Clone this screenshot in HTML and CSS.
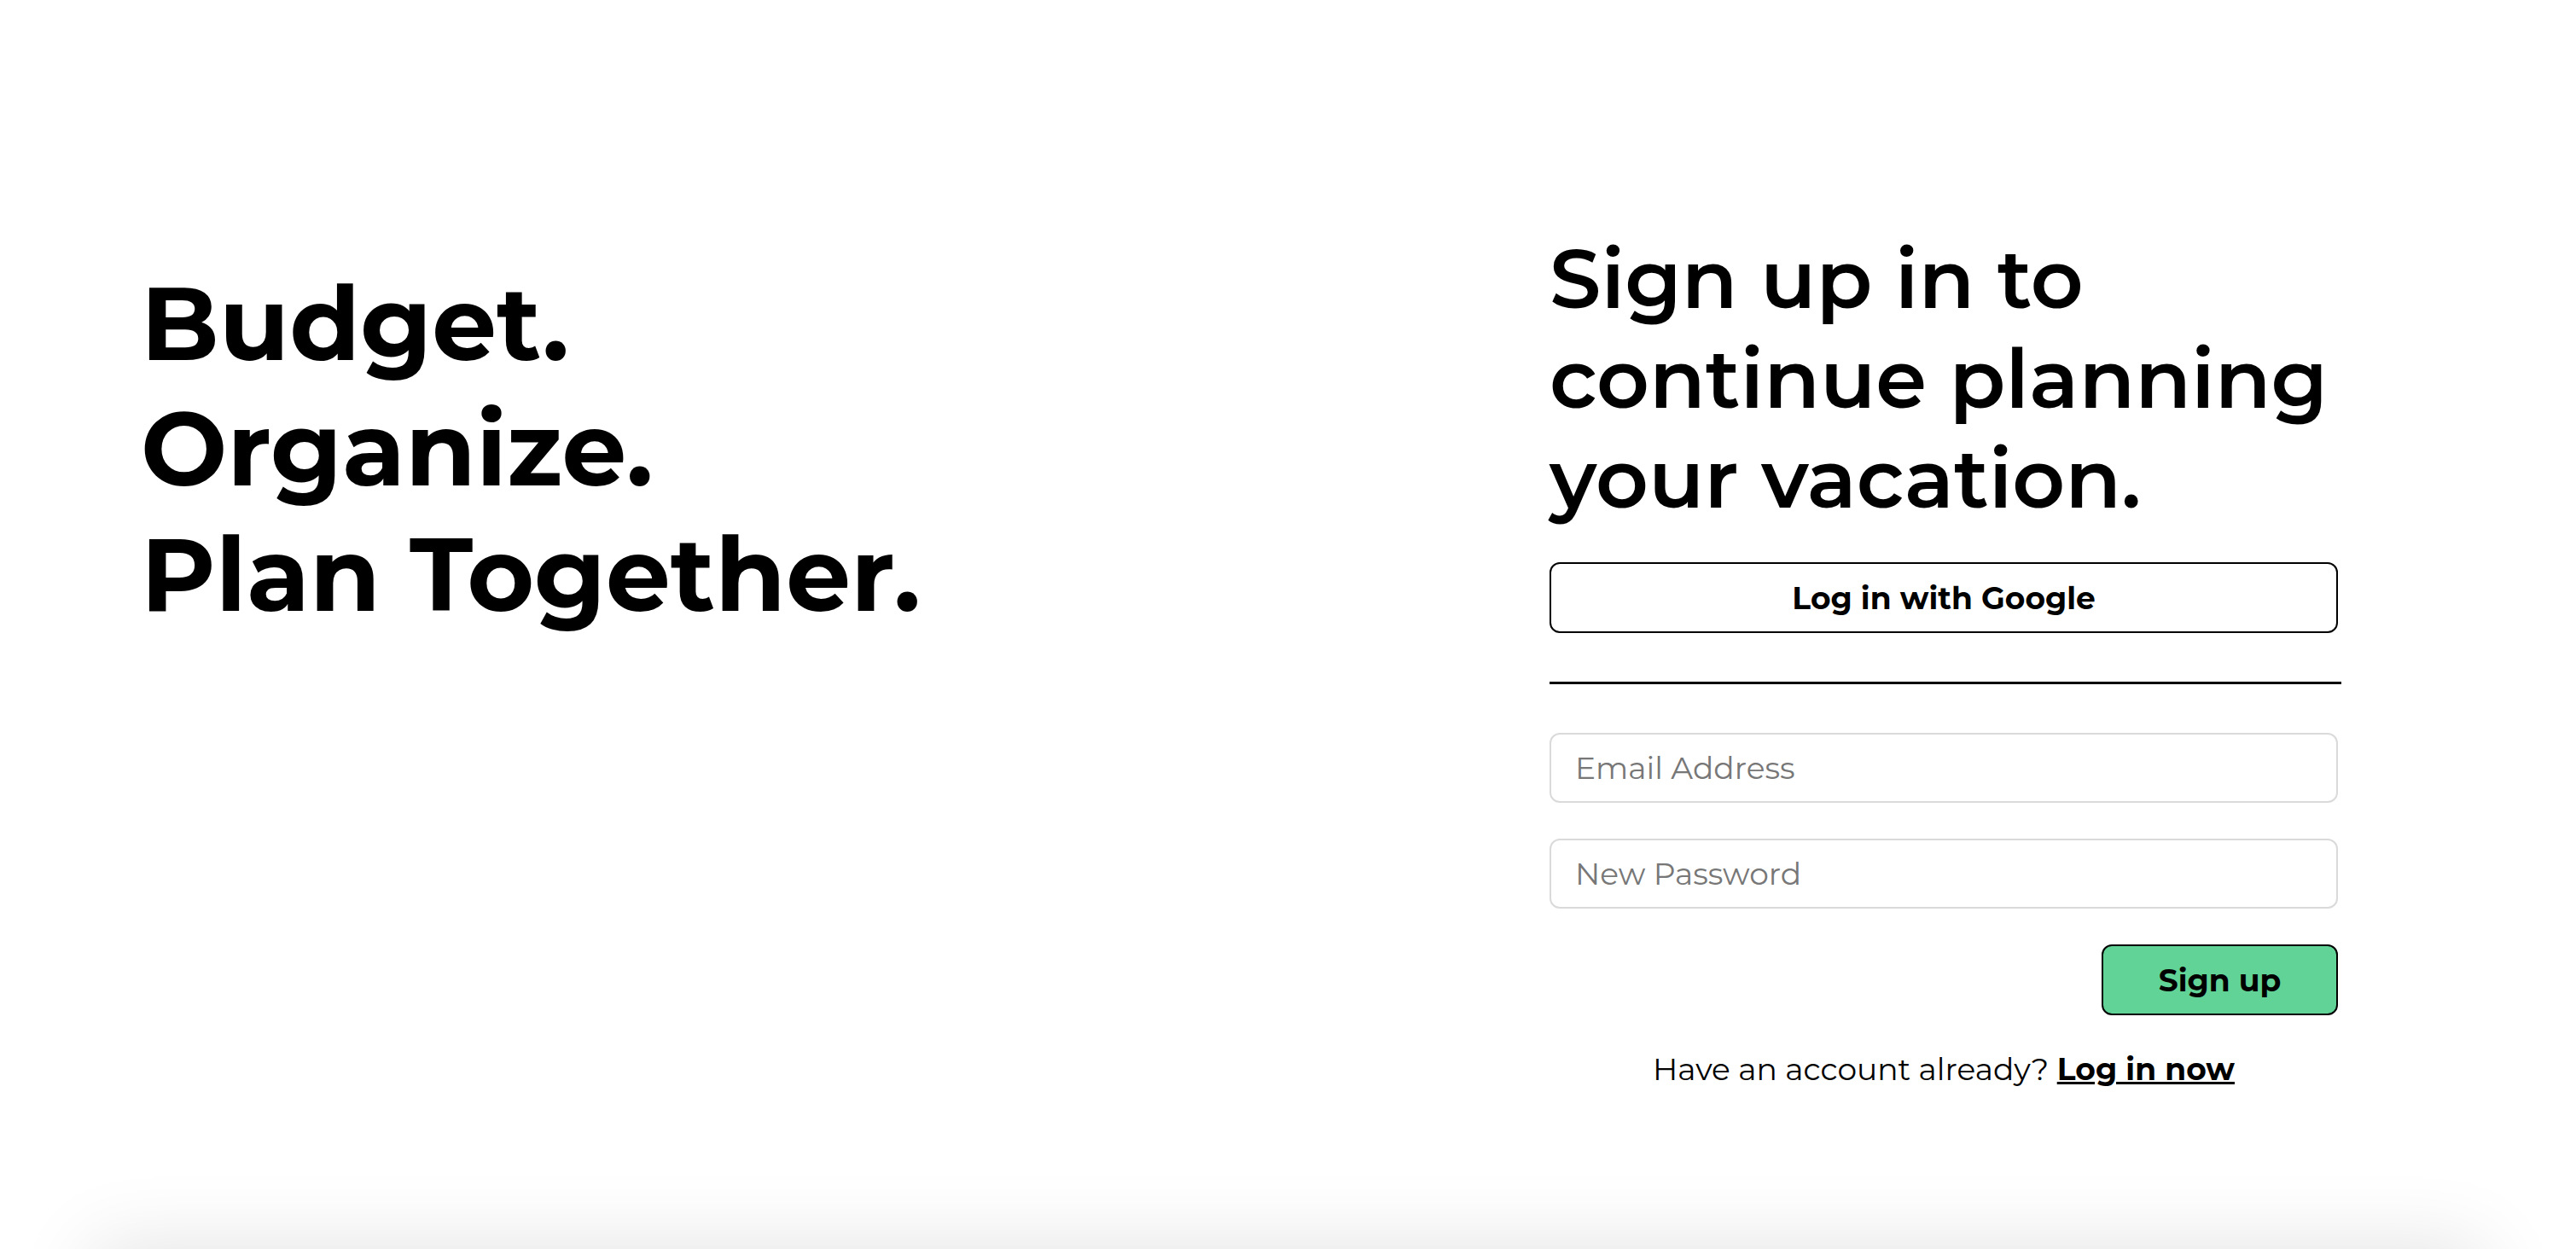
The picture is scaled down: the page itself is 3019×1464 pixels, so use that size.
FILE: index.html
```html
<!DOCTYPE html>
<html lang="en">
<head>
<meta charset="utf-8">
<title>Sign up</title>
<link rel="stylesheet" href="styles.css">
</head>
<body>
<main class="hero">
  <section class="tagline">
    <h1 class="tagline-title">Budget.<br>Organize.<br>Plan Together.</h1>
  </section>
  <section class="auth">
    <h2 class="auth-title">Sign up in to continue planning your vacation.</h2>
    <button class="btn btn-google" type="button">Log in with Google</button>
    <hr class="divider">
    <form class="auth-form">
      <input class="field" type="email" placeholder="Email Address">
      <input class="field" type="password" placeholder="New Password">
      <button class="btn btn-signup" type="submit">Sign up</button>
    </form>
    <p class="switch">Have an account already? <a class="switch-link" href="#">Log in now</a></p>
  </section>
</main>
<section class="below"></section>
</body>
</html>
```
FILE: styles.css
```css
* { box-sizing: border-box; }
html, body { margin: 0; padding: 0; background: #fff; }
body {
  font-family: "Montserrat", Inter, "Open Sans", sans-serif;
  color: #000;
  overflow: hidden;
}
.hero {
  display: flex;
  height: 1464px;
}
.tagline {
  width: 1816px;
  padding: 306px 0 0 165px;
}
.tagline-title {
  margin: 0;
  font-size: 120px;
  font-weight: 700;
  line-height: 147px;
  letter-spacing: 0;
}
.auth {
  width: 924px;
  padding-top: 268px;
  display: flex;
  flex-direction: column;
}
.auth-title {
  margin: 0;
  font-size: 96px;
  font-weight: 600;
  line-height: 117px;
}
.btn {
  font-family: inherit;
  font-weight: 700;
  font-size: 36px;
  color: #000;
  border: 2px solid #000;
  border-radius: 12px;
  height: 83px;
  cursor: pointer;
}
.btn-google {
  margin-top: 40px;
  width: 100%;
  background: #fff;
}
.divider {
  margin: 57px 0 0 0;
  width: 928px;
  border: 0;
  border-top: 3px solid #000;
  height: 0;
}
.auth-form {
  display: flex;
  flex-direction: column;
  gap: 42px;
  margin-top: 57px;
}
.field {
  height: 82px;
  width: 100%;
  border: 2px solid #dadada;
  border-radius: 12px;
  padding: 0 28px;
  font-family: inherit;
  font-size: 36px;
  color: #000;
  background: #fff;
}
.field::placeholder { color: #777; }
.btn-signup {
  align-self: flex-end;
  width: 277px;
  background: #61d396;
}
.switch {
  margin: 41px 0 0 0;
  text-align: center;
  font-size: 36px;
}
.switch-link {
  color: #000;
  font-weight: 700;
  text-decoration: underline;
  text-decoration-thickness: 3px;
}
.below {
  height: 400px;
  margin: 0 110px;
  box-shadow: 0 0 90px rgba(0, 0, 0, 0.12);
}
```
